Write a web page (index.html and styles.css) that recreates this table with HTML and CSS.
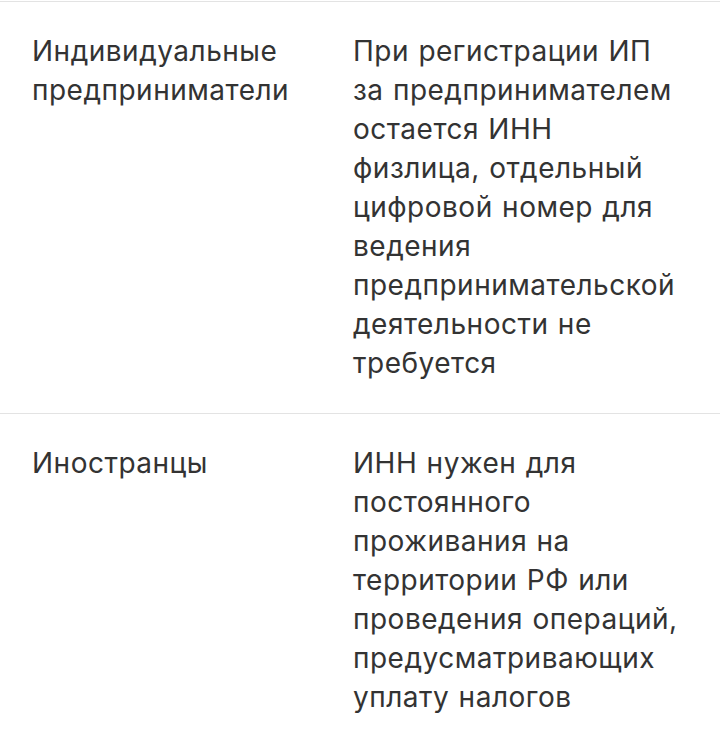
FILE: index.html
```html
<!DOCTYPE html>
<html lang="ru">
<head>
<meta charset="utf-8">
<link rel="stylesheet" href="styles.css">
</head>
<body>
<div class="table">
  <div class="row">
    <div class="cell name">Индивидуальные предприниматели</div>
    <div class="cell desc">При регистрации ИП за предпринимателем остается ИНН физлица, отдельный цифровой номер для ведения предпринимательской деятельности не требуется</div>
  </div>
  <div class="row">
    <div class="cell name">Иностранцы</div>
    <div class="cell desc">ИНН нужен для постоянного проживания на территории РФ или проведения операций, предусматривающих уплату налогов</div>
  </div>
</div>
</body>
</html>
```
FILE: styles.css
```css
html, body {
  margin: 0;
  padding: 0;
  background: #fff;
}
body {
  font-family: Inter, "Noto Sans", sans-serif;
  font-size: 28px;
  line-height: 39px;
  letter-spacing: 0.5px;
  word-spacing: 1px;
  color: #333;
}
.table {
  width: 720px;
}
.row {
  display: grid;
  grid-template-columns: 321px 335px;
  column-gap: 0;
  padding: 30px 32px 30px 32px;
  border-top: 1px solid #e3e3e3;
  margin-top: 1px;
}
.row + .row {
  margin-top: 0;
}
.cell {
  padding: 0;
}
```
